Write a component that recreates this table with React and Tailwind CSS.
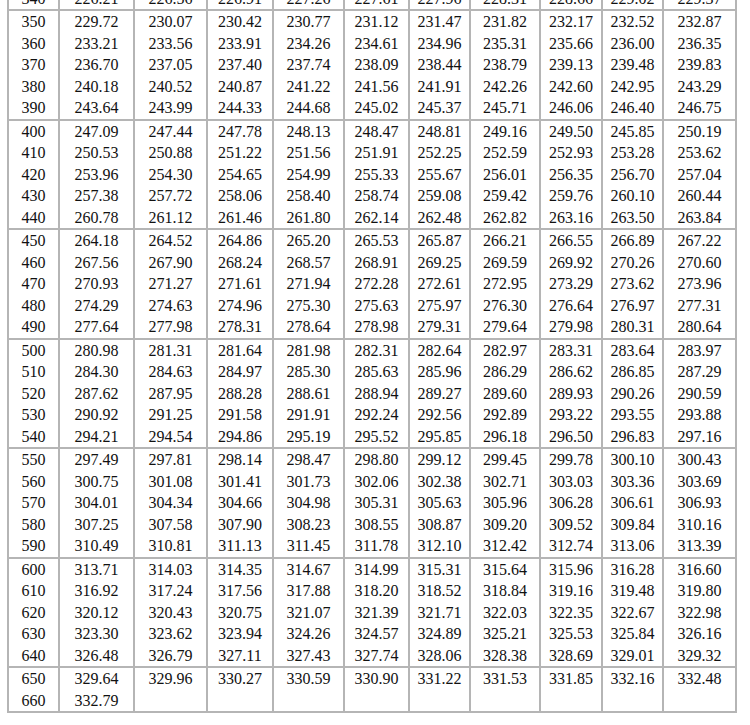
const ROWS = [
  ['340', '226.21', '226.56', '226.91', '227.26', '227.61', '227.96', '228.31', '228.66', '229.02', '229.37'],
  ['350', '229.72', '230.07', '230.42', '230.77', '231.12', '231.47', '231.82', '232.17', '232.52', '232.87'],
  ['360', '233.21', '233.56', '233.91', '234.26', '234.61', '234.96', '235.31', '235.66', '236.00', '236.35'],
  ['370', '236.70', '237.05', '237.40', '237.74', '238.09', '238.44', '238.79', '239.13', '239.48', '239.83'],
  ['380', '240.18', '240.52', '240.87', '241.22', '241.56', '241.91', '242.26', '242.60', '242.95', '243.29'],
  ['390', '243.64', '243.99', '244.33', '244.68', '245.02', '245.37', '245.71', '246.06', '246.40', '246.75'],
  ['400', '247.09', '247.44', '247.78', '248.13', '248.47', '248.81', '249.16', '249.50', '245.85', '250.19'],
  ['410', '250.53', '250.88', '251.22', '251.56', '251.91', '252.25', '252.59', '252.93', '253.28', '253.62'],
  ['420', '253.96', '254.30', '254.65', '254.99', '255.33', '255.67', '256.01', '256.35', '256.70', '257.04'],
  ['430', '257.38', '257.72', '258.06', '258.40', '258.74', '259.08', '259.42', '259.76', '260.10', '260.44'],
  ['440', '260.78', '261.12', '261.46', '261.80', '262.14', '262.48', '262.82', '263.16', '263.50', '263.84'],
  ['450', '264.18', '264.52', '264.86', '265.20', '265.53', '265.87', '266.21', '266.55', '266.89', '267.22'],
  ['460', '267.56', '267.90', '268.24', '268.57', '268.91', '269.25', '269.59', '269.92', '270.26', '270.60'],
  ['470', '270.93', '271.27', '271.61', '271.94', '272.28', '272.61', '272.95', '273.29', '273.62', '273.96'],
  ['480', '274.29', '274.63', '274.96', '275.30', '275.63', '275.97', '276.30', '276.64', '276.97', '277.31'],
  ['490', '277.64', '277.98', '278.31', '278.64', '278.98', '279.31', '279.64', '279.98', '280.31', '280.64'],
  ['500', '280.98', '281.31', '281.64', '281.98', '282.31', '282.64', '282.97', '283.31', '283.64', '283.97'],
  ['510', '284.30', '284.63', '284.97', '285.30', '285.63', '285.96', '286.29', '286.62', '286.85', '287.29'],
  ['520', '287.62', '287.95', '288.28', '288.61', '288.94', '289.27', '289.60', '289.93', '290.26', '290.59'],
  ['530', '290.92', '291.25', '291.58', '291.91', '292.24', '292.56', '292.89', '293.22', '293.55', '293.88'],
  ['540', '294.21', '294.54', '294.86', '295.19', '295.52', '295.85', '296.18', '296.50', '296.83', '297.16'],
  ['550', '297.49', '297.81', '298.14', '298.47', '298.80', '299.12', '299.45', '299.78', '300.10', '300.43'],
  ['560', '300.75', '301.08', '301.41', '301.73', '302.06', '302.38', '302.71', '303.03', '303.36', '303.69'],
  ['570', '304.01', '304.34', '304.66', '304.98', '305.31', '305.63', '305.96', '306.28', '306.61', '306.93'],
  ['580', '307.25', '307.58', '307.90', '308.23', '308.55', '308.87', '309.20', '309.52', '309.84', '310.16'],
  ['590', '310.49', '310.81', '311.13', '311.45', '311.78', '312.10', '312.42', '312.74', '313.06', '313.39'],
  ['600', '313.71', '314.03', '314.35', '314.67', '314.99', '315.31', '315.64', '315.96', '316.28', '316.60'],
  ['610', '316.92', '317.24', '317.56', '317.88', '318.20', '318.52', '318.84', '319.16', '319.48', '319.80'],
  ['620', '320.12', '320.43', '320.75', '321.07', '321.39', '321.71', '322.03', '322.35', '322.67', '322.98'],
  ['630', '323.30', '323.62', '323.94', '324.26', '324.57', '324.89', '325.21', '325.53', '325.84', '326.16'],
  ['640', '326.48', '326.79', '327.11', '327.43', '327.74', '328.06', '328.38', '328.69', '329.01', '329.32'],
  ['650', '329.64', '329.96', '330.27', '330.59', '330.90', '331.22', '331.53', '331.85', '332.16', '332.48'],
  ['660', '332.79', '', '', '', '', '', '', '', '', ''],
]

// rows are boxed in blocks of five (the first block is cut off at the top)
const GROUPS = [
  ROWS.slice(0, 1),
  ROWS.slice(1, 6),
  ROWS.slice(6, 11),
  ROWS.slice(11, 16),
  ROWS.slice(16, 21),
  ROWS.slice(21, 26),
  ROWS.slice(26, 31),
  ROWS.slice(31, 33),
]

function Group({ rows, first, last }) {
  return (
    <div
      className={
        'grid grid-cols-[51px_75px_73px_66px_71px_65px_61px_70px_62px_61px_73px] border-[#b5b5b5] ' +
        (first ? '' : 'border-t-2 ') +
        (last ? 'border-b-2' : '')
      }
    >
      {rows[0].map((_, c) => (
        <div key={c} className="flex flex-col border-r-2 border-[#b5b5b5]">
          {rows.map((r, i) => (
            <div key={i} className="h-[21.5px] leading-[21.5px] text-center">
              {r[c]}
            </div>
          ))}
        </div>
      ))}
    </div>
  )
}

export default function App() {
  return (
    <div className="w-[750px] h-[725px] overflow-hidden bg-white pl-[7px]">
      <div
        className="-mt-[12.5px] w-[730px] border-l-2 border-[#b5b5b5] text-[16px] text-[#111]"
        style={{ fontFamily: '"Liberation Serif", "Times New Roman", serif' }}
      >
        {GROUPS.map((g, i) => (
          <Group key={i} rows={g} first={i === 0} last={i === GROUPS.length - 1} />
        ))}
      </div>
    </div>
  )
}
